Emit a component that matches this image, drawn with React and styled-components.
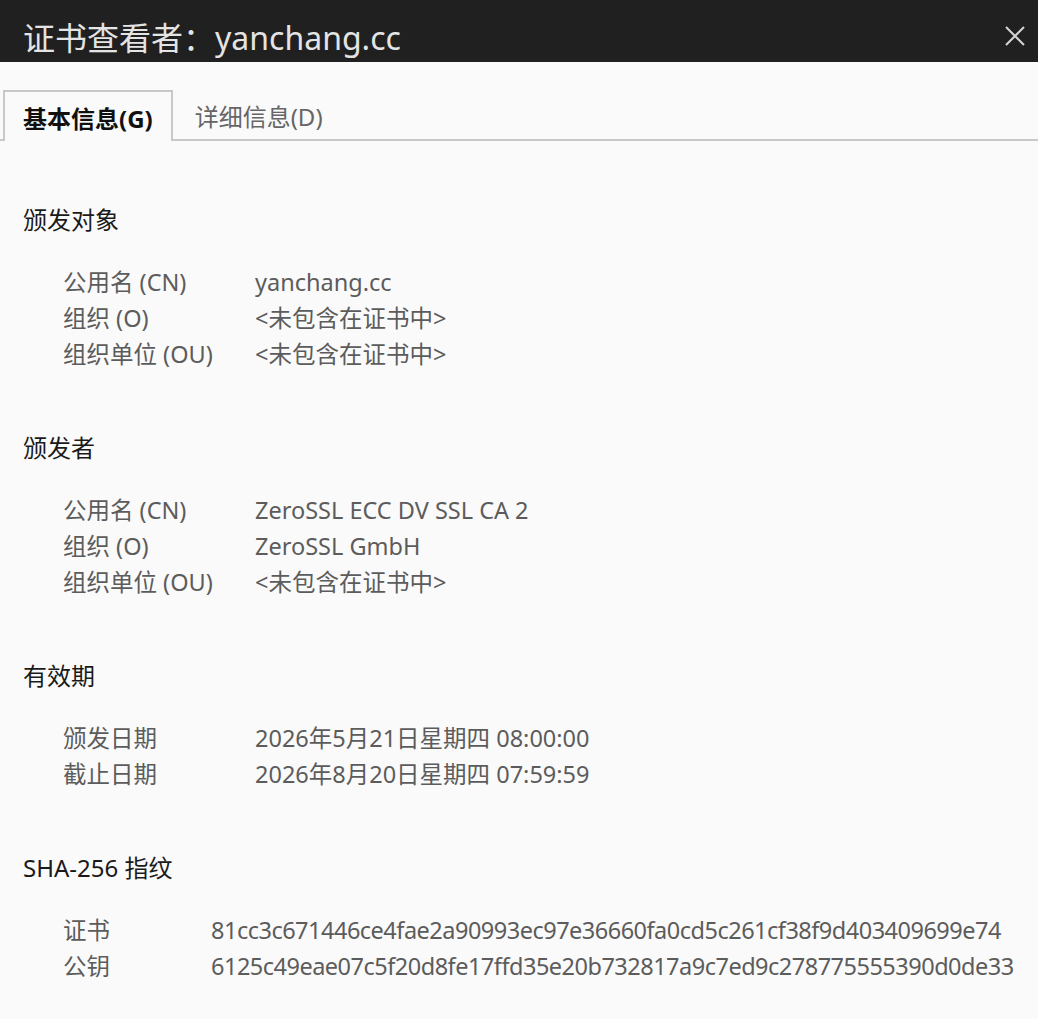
import React from 'react'
import styled, { createGlobalStyle } from 'styled-components'

const GlobalStyle = createGlobalStyle`
  html, body {
    margin: 0;
    padding: 0;
    background: #fafafa;
  }
  body {
    font-family: "Noto Sans", "Noto Sans CJK SC", sans-serif;
  }
`

const Dialog = styled.div`
  width: 1038px;
  min-height: 1019px;
  background: #fafafa;
  display: flex;
  flex-direction: column;
`

const TitleBar = styled.div`
  height: 62px;
  box-sizing: border-box;
  background: #202020;
  display: flex;
  align-items: center;
  justify-content: space-between;
  padding: 14px 11px 0 23px;
`

const Title = styled.h1`
  margin: 0;
  font-size: 32px;
  font-weight: 400;
  line-height: 40px;
  color: #e4e4e4;
`

const CloseButton = styled.button`
  width: 24px;
  height: 24px;
  border: none;
  background: none;
  padding: 0;
  display: flex;
  align-items: center;
  justify-content: center;
  margin-top: -5px;
  cursor: pointer;
`

const TabBar = styled.div`
  margin-top: 28px;
  padding-left: 3px;
  display: flex;
  align-items: flex-end;
  border-bottom: 2px solid #c8c8c8;
`

const Tab = styled.div`
  box-sizing: border-box;
  padding: 2px ${p => (p.$active ? 18 : 22)}px 0;
  display: flex;
  align-items: center;
  font-size: 24px;
  font-weight: ${p => (p.$active ? 700 : 400)};
  color: ${p => (p.$active ? '#111' : '#666')};
  background: #fafafa;
  border: ${p => (p.$active ? '2px solid #c8c8c8' : 'none')};
  border-bottom: none;
  margin-bottom: ${p => (p.$active ? '-2px' : '0')};
  height: ${p => (p.$active ? '51px' : '49px')};
`

const Content = styled.div`
  padding: 3px 23px 0;
`

const Section = styled.section`
  margin-top: 58px;
`

const Heading = styled.h2`
  margin: 0;
  font-size: 24px;
  font-weight: 400;
  line-height: 36px;
  color: #1a1a1a;
`

const Rows = styled.div`
  margin-top: 26px;
  padding-left: 40px;
  display: grid;
  grid-template-columns: ${p => p.$labelWidth}px 1fr;
  grid-auto-rows: 36px;
  align-items: center;
  font-size: 23.5px;
  line-height: 36px;
  color: #5c5c5c;
`

const Cell = styled.div`
  white-space: nowrap;
  letter-spacing: ${p => (p.$mono ? '-0.5px' : 'normal')};
`

const sections = [
  {
    title: '颁发对象',
    labelWidth: 192,
    rows: [
      ['公用名 (CN)', 'yanchang.cc'],
      ['组织 (O)', '<未包含在证书中>'],
      ['组织单位 (OU)', '<未包含在证书中>'],
    ],
  },
  {
    title: '颁发者',
    labelWidth: 192,
    rows: [
      ['公用名 (CN)', 'ZeroSSL ECC DV SSL CA 2'],
      ['组织 (O)', 'ZeroSSL GmbH'],
      ['组织单位 (OU)', '<未包含在证书中>'],
    ],
  },
  {
    title: '有效期',
    labelWidth: 192,
    rows: [
      ['颁发日期', '2026年5月21日星期四 08:00:00'],
      ['截止日期', '2026年8月20日星期四 07:59:59'],
    ],
  },
  {
    title: 'SHA-256 指纹',
    labelWidth: 148,
    hash: true,
    rows: [
      ['证书', '81cc3c671446ce4fae2a90993ec97e36660fa0cd5c261cf38f9d403409699e74'],
      ['公钥', '6125c49eae07c5f20d8fe17ffd35e20b732817a9c7ed9c278775555390d0de33'],
    ],
  },
]

export default function App() {
  return (
    <>
      <GlobalStyle />
      <Dialog>
        <TitleBar>
          <Title>证书查看者：yanchang.cc</Title>
          <CloseButton aria-label="关闭">
            <svg width="22" height="22" viewBox="0 0 22 22">
              <path d="M2 2 L20 20 M20 2 L2 20" stroke="#d4d4d4" strokeWidth="2" />
            </svg>
          </CloseButton>
        </TitleBar>
        <TabBar>
          <Tab $active>基本信息(G)</Tab>
          <Tab>详细信息(D)</Tab>
        </TabBar>
        <Content>
          {sections.map(s => (
            <Section key={s.title}>
              <Heading>{s.title}</Heading>
              <Rows $labelWidth={s.labelWidth}>
                {s.rows.map(([k, v]) => (
                  <React.Fragment key={k}>
                    <Cell>{k}</Cell>
                    <Cell $mono={s.hash}>{v}</Cell>
                  </React.Fragment>
                ))}
              </Rows>
            </Section>
          ))}
        </Content>
      </Dialog>
    </>
  )
}
